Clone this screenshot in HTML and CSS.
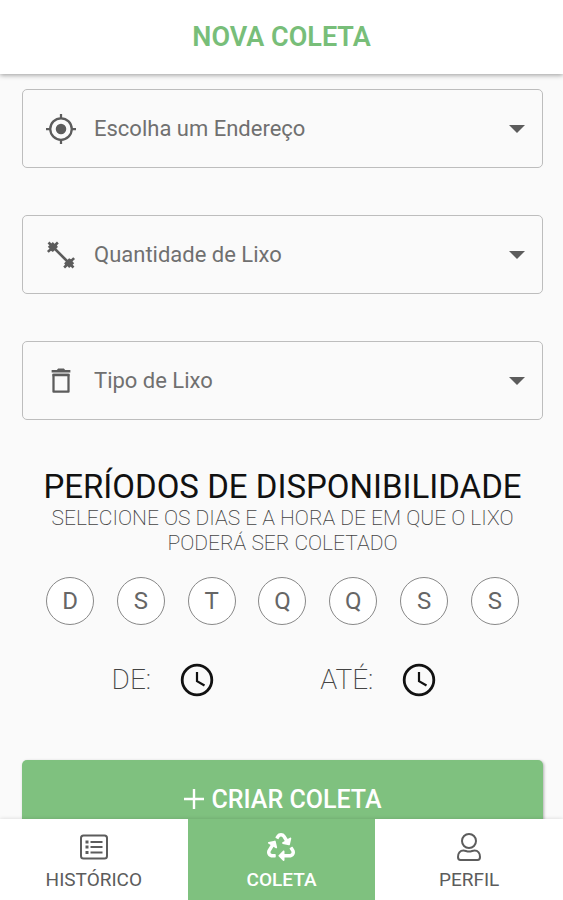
FILE: index.html
```html
<!DOCTYPE html>
<html lang="pt-BR">
<head>
<meta charset="utf-8">
<meta name="viewport" content="width=device-width, initial-scale=1">
<title>Nova Coleta</title>
<link rel="stylesheet" href="styles.css">
</head>
<body>
<header class="topbar"><h1>NOVA COLETA</h1></header>

<main class="content">
  <form class="form">
    <div class="field">
      <svg class="field-icon" viewBox="0 0 24 24" aria-hidden="true">
        <circle cx="12" cy="12" r="8.6" fill="none" stroke="currentColor" stroke-width="1.8"/>
        <circle cx="12" cy="12" r="4.2"/>
        <path d="M12 0v4M12 20v4M0 12h4M20 12h4" fill="none" stroke="currentColor" stroke-width="1.8"/>
      </svg>
      <select class="field-select" aria-label="Endereço"><option>Escolha um Endereço</option></select>
      <svg class="field-arrow" viewBox="0 0 16 8" aria-hidden="true"><path d="M0 0h16L8 8z"/></svg>
    </div>
    <div class="field">
      <svg class="field-icon" viewBox="0 0 24 24" aria-hidden="true">
        <path d="M2 2l20 20M1.500 9.500l8-7.500M22.500 14.500l-8 7.500M2.200 6.200l4-3.800M21.800 17.800l-4 3.800" fill="none" stroke="currentColor" stroke-width="2.100"/>
        <path d="M3 8l5-5 1.500 2.500-4 4zM21 16l-5 5-1.500-2.500 4-4z"/>
      </svg>
      <select class="field-select" aria-label="Quantidade"><option>Quantidade de Lixo</option></select>
      <svg class="field-arrow" viewBox="0 0 16 8" aria-hidden="true"><path d="M0 0h16L8 8z"/></svg>
    </div>
    <div class="field">
      <svg class="field-icon" viewBox="0 0 24 24" aria-hidden="true">
        <path d="M6 7v13.500h12V7z" fill="none" stroke="currentColor" stroke-width="1.800" stroke-linejoin="round"/>
        <path d="M4.500 3.200h4.200l1-1.200h4.600l1 1.200h4.200v1.900h-15zM5.200 6.200h13.600v2H5.200z"/>
      </svg>
      <select class="field-select" aria-label="Tipo"><option>Tipo de Lixo</option></select>
      <svg class="field-arrow" viewBox="0 0 16 8" aria-hidden="true"><path d="M0 0h16L8 8z"/></svg>
    </div>

    <section class="periods">
      <h2>PERÍODOS DE DISPONIBILIDADE</h2>
      <p>SELECIONE OS DIAS E A HORA DE EM QUE O LIXO PODERÁ SER COLETADO</p>
      <div class="days">
        <button type="button" class="day">D</button>
        <button type="button" class="day">S</button>
        <button type="button" class="day">T</button>
        <button type="button" class="day">Q</button>
        <button type="button" class="day">Q</button>
        <button type="button" class="day">S</button>
        <button type="button" class="day">S</button>
      </div>
      <div class="times">
        <div class="time">
          <span id="from">DE:</span>
          <button type="button" class="clock" aria-labelledby="from">
            <svg viewBox="0 0 34 34" fill="none" stroke="currentColor" aria-hidden="true"><circle cx="17" cy="17" r="14.800" stroke-width="2.800"/><path d="M17 9v9.200l7.500 4.300" stroke-width="2.200"/></svg>
          </button>
        </div>
        <div class="time">
          <span id="to">ATÉ:</span>
          <button type="button" class="clock" aria-labelledby="to">
            <svg viewBox="0 0 34 34" fill="none" stroke="currentColor" aria-hidden="true"><circle cx="17" cy="17" r="14.800" stroke-width="2.800"/><path d="M17 9v9.200l7.500 4.300" stroke-width="2.200"/></svg>
          </button>
        </div>
      </div>
    </section>

    <button type="submit" class="submit">
      <svg viewBox="0 0 20 20" aria-hidden="true"><path d="M10 0v20M0 10h20" fill="none" stroke="currentColor" stroke-width="2.400"/></svg>
      CRIAR COLETA
    </button>
  </form>
</main>

<nav class="tabs">
  <a class="tab" href="#historico">
    <svg viewBox="0 0 28 28" fill="none" stroke="currentColor" aria-hidden="true">
      <rect x="1" y="2.500" width="26" height="23" rx="2.500" stroke-width="2"/>
      <path d="M10.500 9h12M10.500 14h12M10.500 19.500h12" stroke-width="1.900"/>
      <path d="M5.500 9h3M5.500 14h3M5.500 19.500h3" stroke-width="2.800"/>
    </svg>
    HISTÓRICO
  </a>
  <a class="tab tab-active" href="#coleta" aria-current="page">
    <svg viewBox="0 0 512 512" fill="currentColor" aria-hidden="true"><path d="M184.561 261.903c3.232 13.997-12.123 24.635-24.068 17.168l-40.736-25.455-50.867 81.402C55.606 356.273 70.96 384 96.012 384H148c6.627 0 12 5.373 12 12v40c0 6.627-5.373 12-12 12H96.115c-75.334 0-121.302-83.048-81.408-146.88l50.822-81.388-40.725-25.448c-12.081-7.547-8.966-25.961 4.879-29.158l110.237-25.45c8.611-1.988 17.201 3.381 19.189 11.99l25.452 110.237zm98.561-182.915l41.289 66.076-40.74 25.457c-12.051 7.528-9 25.953 4.879 29.158l110.237 25.45c8.672 1.999 17.215-3.438 19.189-11.99l25.45-110.237c3.197-13.844-11.99-24.719-24.068-17.168l-40.687 25.424-41.263-66.082c-37.521-60.033-125.209-60.171-162.816 0l-17.963 28.766c-3.51 5.62-1.8 13.021 3.82 16.533l33.919 21.195c5.62 3.512 13.024 1.803 16.536-3.817l17.961-28.743c12.712-20.341 41.973-19.676 54.257-.022zM497.288 301.12l-27.515-44.065c-3.511-5.623-10.916-7.334-16.538-3.821l-33.861 21.159c-5.62 3.512-7.33 10.915-3.818 16.536l27.564 44.112c13.257 21.211-2.057 48.96-27.136 48.96H320V336.02c0-14.213-17.242-21.383-27.313-11.313l-80 79.981c-6.249 6.248-6.249 16.379 0 22.627l80 79.989C302.689 517.308 320 510.3 320 495.989V448h95.88c75.274 0 121.335-82.997 81.408-146.88z"/></svg>
    COLETA
  </a>
  <a class="tab" href="#perfil">
    <svg viewBox="0 0 28 28" fill="none" stroke="currentColor" stroke-width="2" aria-hidden="true">
      <circle cx="14" cy="8" r="7"/>
      <path d="M8.500 17.500c2 0 3 1 5.500 1s3.500-1 5.500-1c3.500 0 5.500 3 5.500 6.500 0 1.800-.9 3-2.500 3h-17C3.900 27 3 25.800 3 24c0-3.500 2-6.500 5.500-6.500z"/>
    </svg>
    PERFIL
  </a>
</nav>
</body>
</html>
```
FILE: styles.css
```css
:root {
  --green: #7fc17f;
  --grey: #5c5c5c;
}

* {
  box-sizing: border-box;
}

body {
  margin: 0;
  height: 100vh;
  display: flex;
  flex-direction: column;
  background: #fafafa;
  color: #000;
  font-family: Roboto, "Liberation Sans", sans-serif;
}

button,
select {
  font: inherit;
  color: inherit;
}

h1,
h2,
p {
  margin: 0;
}

.topbar {
  position: relative;
  z-index: 1;
  padding: 20px;
  background: #fff;
  box-shadow: 0 1px 5px rgba(0, 0, 0, 0.4);
  text-align: center;
}

.topbar h1 {
  color: #78be79;
  font-size: 27px;
  line-height: 34px;
  font-weight: 600;
}

.content {
  flex: 1;
  min-height: 0;
  overflow-y: auto;
  scrollbar-width: none;
}

.form {
  display: flex;
  flex-direction: column;
  gap: 47px;
  padding: 15px 20px 24px 22px;
}

.field {
  position: relative;
  color: var(--grey);
}

.field-select {
  display: block;
  width: 100%;
  height: 79px;
  padding: 0 48px 0 71px;
  border: 1px solid #bdbdbd;
  border-radius: 5px;
  background: transparent;
  appearance: none;
  color: #707070;
  font-size: 22px;
}

.field-icon,
.field-arrow {
  position: absolute;
  top: 0;
  bottom: 0;
  margin: auto 0;
  fill: currentColor;
  pointer-events: none;
}

.field-icon {
  left: 24px;
  width: 30px;
  height: 30px;
}

.field-arrow {
  right: 18px;
  width: 16px;
  height: 8px;
}

.periods {
  padding-top: 1px;
  text-align: center;
}

.periods h2 {
  color: #111;
  font-size: 33px;
  line-height: 38px;
  font-weight: 400;
}

.periods p {
  padding: 0 24px;
  color: #444;
  font-size: 21px;
  line-height: 25px;
  font-weight: 200;
}

.days {
  display: flex;
  justify-content: space-between;
  padding: 21px 24px 0;
}

.day {
  width: 48px;
  height: 48px;
  padding: 0;
  border: 1px solid #888;
  border-radius: 50%;
  background: #fff;
  color: #666;
  font-size: 24px;
}

.times {
  display: flex;
  justify-content: center;
  gap: 106px;
  padding: 36px 17px 0 0;
}

.time {
  display: flex;
  align-items: center;
  gap: 29px;
  color: #444;
  font-size: 28px;
  line-height: 38px;
  font-weight: 200;
}

.clock {
  display: flex;
  padding: 0;
  border: 0;
  background: none;
  color: #111;
}

.clock svg {
  width: 34px;
  height: 34px;
}

.submit {
  display: flex;
  align-items: center;
  justify-content: center;
  gap: 8px;
  height: 78px;
  margin-top: 14px;
  padding: 0;
  border: 0;
  border-radius: 5px;
  background: var(--green);
  box-shadow: 1px 1px 3px rgba(0, 0, 0, 0.3);
  color: #fff;
  font-size: 25px;
  font-weight: 500;
}

.submit svg {
  width: 20px;
  height: 20px;
}

.tabs {
  position: relative;
  display: grid;
  grid-template-columns: repeat(3, 1fr);
  background: #fff;
  box-shadow: 0 0 4px rgba(0, 0, 0, 0.15);
}

.tab {
  display: flex;
  flex-direction: column;
  align-items: center;
  gap: 7px;
  padding: 14px 0 8px;
  color: var(--grey);
  font-size: 19px;
  line-height: 24px;
  text-decoration: none;
}

.tab svg {
  width: 28px;
  height: 28px;
}

.tab-active {
  background: var(--green);
  color: #fff;
  font-weight: 500;
}
```
